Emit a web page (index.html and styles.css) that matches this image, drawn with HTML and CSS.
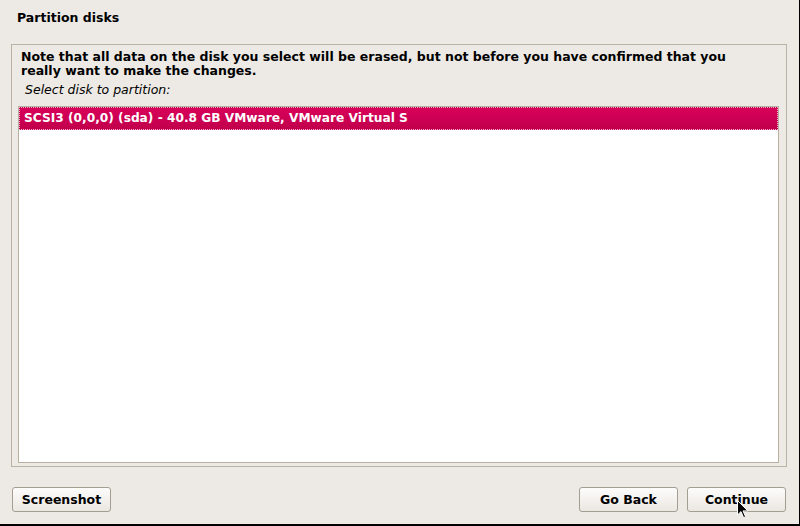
FILE: index.html
```html
<!DOCTYPE html>
<html>
<head>
<meta charset="utf-8">
<link rel="stylesheet" href="styles.css">
</head>
<body>
<div class="screen">
  <div class="title">Partition disks</div>
  <div class="frame">
    <p class="note">Note that all data on the disk you select will be erased, but not before you have confirmed that you really want to make the changes.</p>
    <p class="prompt">Select disk to partition:</p>
    <div class="list">
      <div class="row selected">SCSI3 (0,0,0) (sda) - 40.8 GB VMware, VMware Virtual S</div>
    </div>
  </div>
  <div class="buttons">
    <button class="btn">Screenshot</button>
    <div class="spacer"></div>
    <button class="btn">Go Back</button>
    <button class="btn">Continue</button>
  </div>
  <svg class="cursor" width="12" height="19" viewBox="0 0 12 19">
    <path d="M0.5 0.5 L0.5 15 L4 11.6 L6.6 17.6 L8.6 16.7 L6 10.9 L10.8 10.9 Z" fill="#000" stroke="#fff" stroke-width="1" stroke-linejoin="miter"/>
  </svg>
</div>
</body>
</html>
```

FILE: styles.css
```css
html, body {
  margin: 0;
  padding: 0;
  background: #000;
}
.screen {
  position: relative;
  width: 799px;
  height: 524px;
  background: #edeae5;
  font-family: "DejaVu Sans", sans-serif;
  font-size: 12.5px;
  color: #000;
  display: flex;
  flex-direction: column;
  overflow: hidden;
}
.title {
  font-weight: bold;
  height: 44px;
  line-height: 16px;
  padding: 10px 0 0 17px;
  box-sizing: border-box;
}
.frame {
  margin-left: 11px;
  width: 776px;
  height: 423px;
  box-sizing: border-box;
  border: 1px solid #bab2a5;
  padding: 5px 7px 3px 6px;
  display: flex;
  flex-direction: column;
}
.note {
  margin: 0 0 0 3px;
  width: 725px;
  font-weight: bold;
  line-height: 14px;
}
.prompt {
  margin: 4px 0 8px 7px;
  font-style: italic;
  line-height: 16px;
  height: 16px;
}
.list {
  flex: 1;
  margin-bottom: 0;
  background: #fff;
  border: 1px solid #b9b0a2;
}
.row {
  height: 23px;
  line-height: 21px;
  box-sizing: border-box;
  padding-left: 4px;
  font-size: 12.2px;
  font-weight: bold;
  white-space: nowrap;
}
.selected {
  color: #fff;
  background: linear-gradient(#d8005a, #c1004b);
  border: 1px dotted #f3b5cc;
}
.buttons {
  display: flex;
  align-items: flex-start;
  gap: 9px;
  padding: 20px 13px 0 12px;
}
.spacer {
  flex: 1;
}
.btn {
  width: 99px;
  height: 25px;
  margin: 0;
  padding: 0;
  font-family: "DejaVu Sans", sans-serif;
  font-size: 12.5px;
  font-weight: bold;
  color: #000;
  border: 1px solid #a49d92;
  border-radius: 3px;
  background: linear-gradient(#fdfcfb, #ebe7e2);
}
.cursor {
  position: absolute;
  left: 737px;
  top: 500px;
}
```
